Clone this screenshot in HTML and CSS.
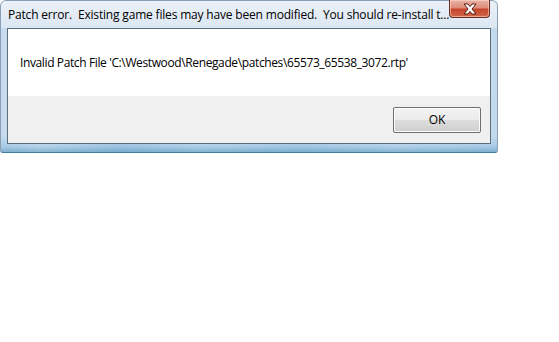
FILE: index.html
```html
<!DOCTYPE html>
<html>
<head>
<meta charset="utf-8">
<link rel="stylesheet" href="styles.css">
</head>
<body>
<div class="window">
  <div class="titlebar">
    <span class="title">Patch error.&nbsp; Existing game files may have been modified.&nbsp; You should re-install t...</span>
    <div class="close">
      <svg width="20" height="12" viewBox="0 0 20 12">
        <path d="M4 1 L8 1 L10 3.6 L12 1 L16 1 L12 6 L16 11 L12 11 L10 8.4 L8 11 L4 11 L8 6 Z" fill="#ffffff" stroke="#5a1a10" stroke-width="1" stroke-linejoin="round"/>
      </svg>
    </div>
  </div>
  <div class="client">
    <div class="content">
      <span class="message">Invalid Patch File 'C:\Westwood\Renegade\patches\65573_65538_3072.rtp'</span>
    </div>
    <div class="footer">
      <button class="ok">OK</button>
    </div>
  </div>
</div>
</body>
</html>
```

FILE: styles.css
```css
html, body {
  margin: 0;
  padding: 0;
  background: #ffffff;
}

.window {
  width: 498px;
  height: 153px;
  box-sizing: border-box;
  display: flex;
  flex-direction: column;
  border: 1px solid #8a9fb4;
  border-bottom-color: #3f7d9c;
  border-radius: 6px 6px 3px 3px;
  background:
    linear-gradient(180deg, rgba(255,255,255,0) 0, rgba(255,255,255,0) 135px, rgba(120,175,215,0.35) 145px, rgba(70,140,180,0.6) 152px),
    linear-gradient(90deg, #c4daee 0, #d8e7f4 40px, #b5d0e8 120px, #cfe2f2 200px, #bcd5ea 300px, #d4e5f3 400px, #c2d9ed 498px);
  font-family: "Open Sans", "Noto Sans", sans-serif;
  font-size: 12px;
  color: #000;
}

.titlebar {
  height: 27px;
  display: flex;
  align-items: flex-start;
  justify-content: space-between;
  background: linear-gradient(180deg, #e9f0f7 0, #e4ecf5 14px, #dbe7f2 27px);
  border-radius: 5px 5px 0 0;
  padding-left: 7px;
  padding-right: 6px;
}

.title {
  margin-top: 5px;
  white-space: nowrap;
  letter-spacing: -0.18px;
  color: #000;
}

.close {
  width: 43px;
  height: 18px;
  box-sizing: border-box;
  margin-top: -1px;
  margin-right: 1px;
  border: 1px solid #6b2a1e;
  border-top: none;
  border-radius: 0 0 4px 4px;
  background: linear-gradient(180deg, #eab2a4 0, #dd8d7a 45%, #c5442c 55%, #d2674c 100%);
  box-shadow: inset 0 0 0 1px rgba(255,220,210,0.55);
  display: flex;
  align-items: center;
  justify-content: center;
}

.close svg {
  display: block;
}

.client {
  flex: 1;
  margin: 0 6px 8px 6px;
  display: flex;
  flex-direction: column;
  border: 1px solid #5e6d7c;
  background: #f0f0f0;
}

.content {
  height: 67px;
  background: #ffffff;
  padding-left: 12px;
  display: flex;
  align-items: center;
  box-sizing: border-box;
}

.message {
  white-space: nowrap;
  letter-spacing: -0.38px;
}

.footer {
  flex: 1;
  display: flex;
  justify-content: flex-end;
  align-items: center;
  padding-right: 9px;
}

.ok {
  width: 88px;
  height: 26px;
  box-sizing: border-box;
  border: 1px solid #707070;
  border-radius: 2px;
  background: linear-gradient(180deg, #f3f3f3 0, #ebebeb 50%, #dddddd 50%, #cfcfcf 100%);
  box-shadow: inset 0 0 0 1px #fcfcfc;
  font-family: "Open Sans", "Noto Sans", sans-serif;
  font-size: 12px;
  color: #000;
  padding: 0;
}
```
